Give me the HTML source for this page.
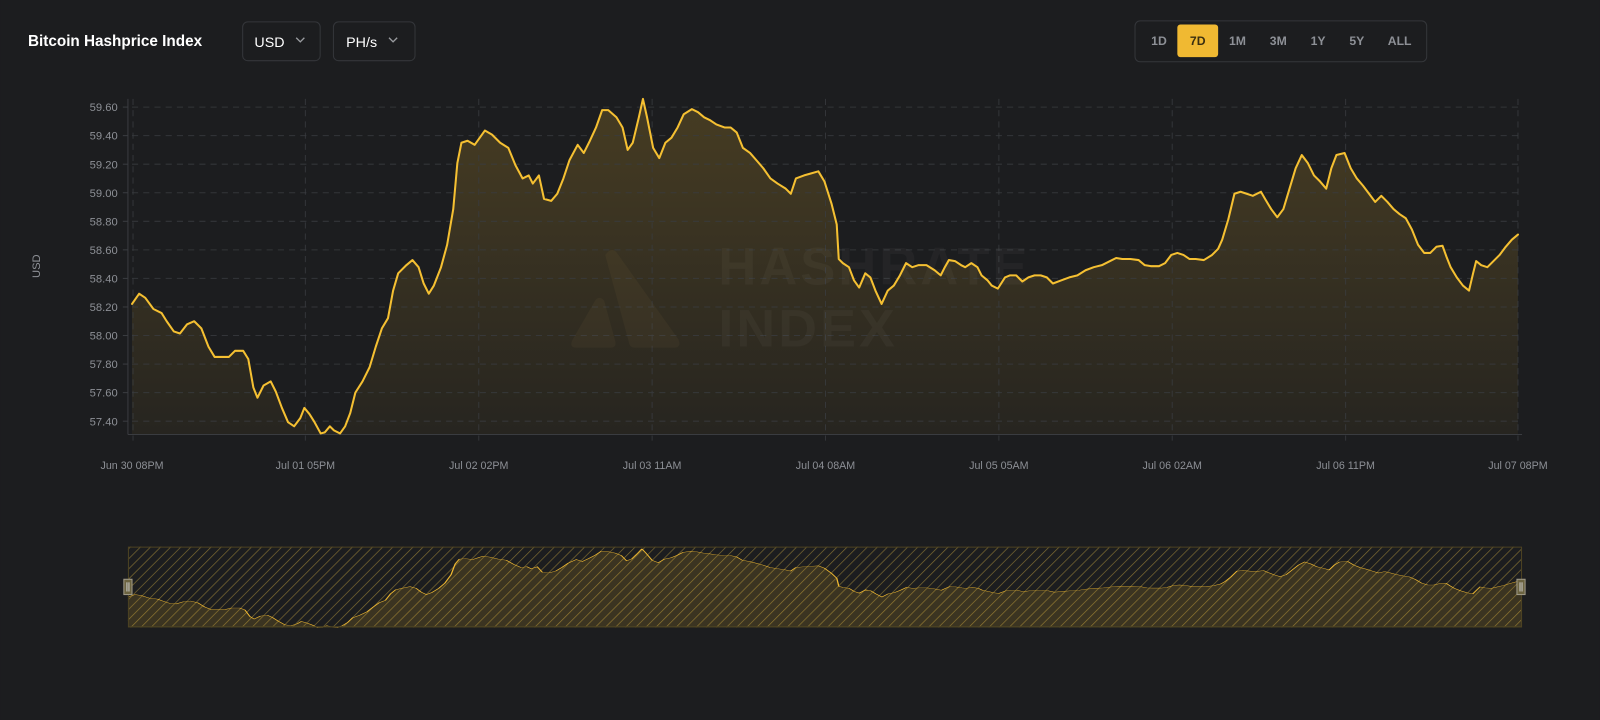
<!DOCTYPE html>
<html><head><meta charset="utf-8"><style>
html,body{margin:0;padding:0;background:#1c1d1f;width:1600px;height:720px;overflow:hidden}
svg{display:block}
text{font-family:"Liberation Sans",sans-serif}
</style></head><body>
<svg width="1600" height="720" viewBox="0 0 1568 706" xmlns="http://www.w3.org/2000/svg">
<defs>
<linearGradient id="fg" x1="0" y1="0" x2="0" y2="1">
<stop offset="0" stop-color="#f0b932" stop-opacity="0.2"/>
<stop offset="1" stop-color="#f0b932" stop-opacity="0.05"/>
</linearGradient>
<pattern id="hatch" width="7" height="7" patternUnits="userSpaceOnUse" patternTransform="rotate(45)">
<line x1="0" y1="0" x2="0" y2="7" stroke="#9a8238" stroke-width="1.3" stroke-opacity="0.8"/>
</pattern>
<polygon id="area" points="129,298 136,288 142,292 150,303 158,307 163,315 170,325 176,327 183,318 190,315 197,322 204,340 210,350 216,350 224,350 230,344 238,344 243,352 248,380 252,390 258,378 265,374 270,384 276,400 282,414 288,418 294,410 298,400 303,406 308,414 314,425 318,424 323,418 327,422 333,425 338,418 343,405 348,385 355,374 362,360 368,340 374,322 380,312 385,285 390,268 398,260 404,255 410,262 415,278 420,288 425,280 432,262 438,240 444,205 448,160 452,140 458,138 465,142 470,135 475,128 482,132 490,140 498,145 505,162 512,175 518,172 522,180 528,172 533,195 540,197 546,190 552,175 558,157 566,142 572,150 578,138 584,125 590,108 596,108 604,115 610,125 615,147 620,140 626,115 630,97 634,115 640,145 646,155 652,140 658,135 664,125 670,112 678,107 684,110 690,115 696,118 702,122 710,125 716,125 722,130 728,145 735,150 742,158 748,165 755,175 762,180 770,185 775,190 780,175 788,172 795,170 802,168 808,178 815,200 820,220 822,254 826,258 832,262 837,275 842,282 848,268 853,272 858,285 864,298 870,285 876,280 882,270 888,258 894,262 900,260 908,260 916,265 922,270 926,262 930,255 936,256 942,260 946,262 952,258 958,262 962,270 968,275 972,280 978,283 985,272 990,270 996,270 1002,276 1008,272 1014,270 1020,270 1026,272 1032,278 1040,275 1048,272 1056,270 1064,265 1072,262 1080,260 1088,256 1094,253 1100,254 1108,254 1116,255 1122,260 1128,261 1136,261 1142,258 1148,250 1154,248 1160,250 1166,254 1172,254 1180,255 1188,250 1194,244 1198,235 1204,215 1210,190 1216,188 1222,190 1228,192 1236,188 1240,195 1246,205 1252,213 1258,205 1264,185 1270,165 1276,152 1282,160 1288,172 1294,178 1300,185 1305,165 1310,152 1318,150 1324,165 1330,175 1336,182 1342,190 1348,198 1354,192 1360,198 1366,205 1372,210 1378,214 1384,225 1390,240 1396,248 1402,248 1408,242 1414,241 1418,252 1422,262 1428,272 1434,280 1440,285 1444,268 1447,256 1452,260 1458,262 1464,256 1470,250 1476,242 1482,235 1488,230 1488,426 129,426"/>
<polyline id="ln" fill="none" points="129,298 136,288 142,292 150,303 158,307 163,315 170,325 176,327 183,318 190,315 197,322 204,340 210,350 216,350 224,350 230,344 238,344 243,352 248,380 252,390 258,378 265,374 270,384 276,400 282,414 288,418 294,410 298,400 303,406 308,414 314,425 318,424 323,418 327,422 333,425 338,418 343,405 348,385 355,374 362,360 368,340 374,322 380,312 385,285 390,268 398,260 404,255 410,262 415,278 420,288 425,280 432,262 438,240 444,205 448,160 452,140 458,138 465,142 470,135 475,128 482,132 490,140 498,145 505,162 512,175 518,172 522,180 528,172 533,195 540,197 546,190 552,175 558,157 566,142 572,150 578,138 584,125 590,108 596,108 604,115 610,125 615,147 620,140 626,115 630,97 634,115 640,145 646,155 652,140 658,135 664,125 670,112 678,107 684,110 690,115 696,118 702,122 710,125 716,125 722,130 728,145 735,150 742,158 748,165 755,175 762,180 770,185 775,190 780,175 788,172 795,170 802,168 808,178 815,200 820,220 822,254 826,258 832,262 837,275 842,282 848,268 853,272 858,285 864,298 870,285 876,280 882,270 888,258 894,262 900,260 908,260 916,265 922,270 926,262 930,255 936,256 942,260 946,262 952,258 958,262 962,270 968,275 972,280 978,283 985,272 990,270 996,270 1002,276 1008,272 1014,270 1020,270 1026,272 1032,278 1040,275 1048,272 1056,270 1064,265 1072,262 1080,260 1088,256 1094,253 1100,254 1108,254 1116,255 1122,260 1128,261 1136,261 1142,258 1148,250 1154,248 1160,250 1166,254 1172,254 1180,255 1188,250 1194,244 1198,235 1204,215 1210,190 1216,188 1222,190 1228,192 1236,188 1240,195 1246,205 1252,213 1258,205 1264,185 1270,165 1276,152 1282,160 1288,172 1294,178 1300,185 1305,165 1310,152 1318,150 1324,165 1330,175 1336,182 1342,190 1348,198 1354,192 1360,198 1366,205 1372,210 1378,214 1384,225 1390,240 1396,248 1402,248 1408,242 1414,241 1418,252 1422,262 1428,272 1434,280 1440,285 1444,268 1447,256 1452,260 1458,262 1464,256 1470,250 1476,242 1482,235 1488,230"/>
</defs>
<rect width="1568" height="706" fill="#1c1d1f"/>
<!-- header -->
<text x="27" y="45" fill="#fff" font-size="15" font-weight="bold">Bitcoin Hashprice Index</text>
<rect x="237.5" y="21.5" width="76" height="38" rx="5" fill="#1c1d1f" stroke="#34363a"/>
<text x="249" y="46" fill="#fff" font-size="14">USD</text>
<path d="M290 37l4 4 4-4" fill="none" stroke="#9a9ca0" stroke-width="1.3"/>
<rect x="326.5" y="21.5" width="80" height="38" rx="5" fill="#1c1d1f" stroke="#34363a"/>
<text x="339" y="46" fill="#fff" font-size="14">PH/s</text>
<path d="M381 37l4 4 4-4" fill="none" stroke="#9a9ca0" stroke-width="1.3"/>
<rect x="1112.5" y="20.5" width="286" height="40" rx="5" fill="#1c1d1f" stroke="#34363a"/>
<rect x="1154" y="24" width="40" height="32" rx="3" fill="#f0b932"/>
<g font-size="12" font-weight="bold" fill="#8d9096" text-anchor="middle">
<text x="1136" y="44">1D</text>
<text x="1174" y="44" fill="#3a2f10">7D</text>
<text x="1213" y="44">1M</text>
<text x="1253" y="44">3M</text>
<text x="1292" y="44">1Y</text>
<text x="1330" y="44">5Y</text>
<text x="1372" y="44">ALL</text>
</g>
<!-- fill -->
<use href="#area" fill="url(#fg)"/>
<!-- grid -->
<g stroke="#3a3c40" stroke-opacity="0.8" stroke-dasharray="6 5" stroke-width="1">
<line x1="129" y1="105" x2="1488" y2="105"/><line x1="129" y1="133" x2="1488" y2="133"/><line x1="129" y1="161" x2="1488" y2="161"/><line x1="129" y1="189" x2="1488" y2="189"/><line x1="129" y1="217" x2="1488" y2="217"/><line x1="129" y1="245" x2="1488" y2="245"/><line x1="129" y1="273" x2="1488" y2="273"/><line x1="129" y1="301" x2="1488" y2="301"/><line x1="129" y1="329" x2="1488" y2="329"/><line x1="129" y1="357" x2="1488" y2="357"/><line x1="129" y1="385" x2="1488" y2="385"/><line x1="129" y1="413" x2="1488" y2="413"/>
<line x1="130" y1="97" x2="130" y2="432"/><line x1="299" y1="97" x2="299" y2="432"/><line x1="469" y1="97" x2="469" y2="432"/><line x1="639" y1="97" x2="639" y2="432"/><line x1="809" y1="97" x2="809" y2="432"/><line x1="979" y1="97" x2="979" y2="432"/><line x1="1149" y1="97" x2="1149" y2="432"/><line x1="1319" y1="97" x2="1319" y2="432"/><line x1="1488" y1="97" x2="1488" y2="432"/>
</g>
<line x1="125" y1="97" x2="125" y2="426" stroke="#3a3c40"/>
<line x1="125" y1="426" x2="1492" y2="426" stroke="#3a3c40"/>
<g stroke="#3a3c40"><line x1="120" y1="105" x2="125" y2="105"/><line x1="120" y1="133" x2="125" y2="133"/><line x1="120" y1="161" x2="125" y2="161"/><line x1="120" y1="189" x2="125" y2="189"/><line x1="120" y1="217" x2="125" y2="217"/><line x1="120" y1="245" x2="125" y2="245"/><line x1="120" y1="273" x2="125" y2="273"/><line x1="120" y1="301" x2="125" y2="301"/><line x1="120" y1="329" x2="125" y2="329"/><line x1="120" y1="357" x2="125" y2="357"/><line x1="120" y1="385" x2="125" y2="385"/><line x1="120" y1="413" x2="125" y2="413"/></g>
<g font-size="11" fill="#8d9096" text-anchor="end">
<text x="115" y="109">59.60</text><text x="115" y="137">59.40</text><text x="115" y="165">59.20</text><text x="115" y="193">59.00</text><text x="115" y="221">58.80</text><text x="115" y="249">58.60</text><text x="115" y="277">58.40</text><text x="115" y="305">58.20</text><text x="115" y="333">58.00</text><text x="115" y="361">57.80</text><text x="115" y="389">57.60</text><text x="115" y="417">57.40</text>
</g>
<text transform="translate(39,261) rotate(-90)" font-size="11" fill="#8d9096" text-anchor="middle">USD</text>
<g font-size="10.5" fill="#8d9096" text-anchor="middle">
<text x="129" y="460">Jun 30 08PM</text><text x="299" y="460">Jul 01 05PM</text><text x="469" y="460">Jul 02 02PM</text><text x="639" y="460">Jul 03 11AM</text><text x="809" y="460">Jul 04 08AM</text><text x="979" y="460">Jul 05 05AM</text><text x="1149" y="460">Jul 06 02AM</text><text x="1319" y="460">Jul 06 11PM</text><text x="1488" y="460">Jul 07 08PM</text>
</g>
<!-- watermark -->
<g fill="#d8b860" fill-opacity="0.05">
<path d="M593 250 Q600 240 606 250 L665 333 Q668 341 660 341 L622 341 Q617 341 616 335 Z"/>
<path d="M583 295 Q587 289 592 295 L603 335 Q604 341 598 341 L565 341 Q557 341 561 333 Z"/>
</g>
<g fill="#ffffff" fill-opacity="0.035">
<text x="704" y="279" font-size="52" font-weight="bold" letter-spacing="3" textLength="306" lengthAdjust="spacingAndGlyphs">HASHRATE</text>
<text x="704" y="340" font-size="52" font-weight="bold" letter-spacing="3" textLength="176" lengthAdjust="spacingAndGlyphs">INDEX</text>
</g>
<use href="#ln" stroke="#f5c032" stroke-width="2" stroke-linejoin="round" stroke-linecap="round"/>
<!-- navigator -->
<rect x="125" y="536" width="1367" height="79" fill="url(#hatch)"/>
<g transform="translate(125,536) scale(1.0059,0.235) translate(-129,-88)">
<use href="#area" fill="#f0b932" fill-opacity="0.15"/>
<use href="#ln" stroke="#f0b932" stroke-width="1.3" vector-effect="non-scaling-stroke"/>
</g>
<rect x="125.5" y="536.5" width="1366" height="78" fill="none" stroke="#4c4222"/>
<rect x="121" y="568" width="8" height="15" fill="#6b6340" stroke="#a09a88"/>
<line x1="124" y1="571" x2="124" y2="580" stroke="#ccc"/><line x1="126" y1="571" x2="126" y2="580" stroke="#ccc"/>
<rect x="1487" y="568" width="8" height="15" fill="#6b6340" stroke="#a09a88"/>
<line x1="1490" y1="571" x2="1490" y2="580" stroke="#ccc"/><line x1="1492" y1="571" x2="1492" y2="580" stroke="#ccc"/>
</svg>
</body></html>
